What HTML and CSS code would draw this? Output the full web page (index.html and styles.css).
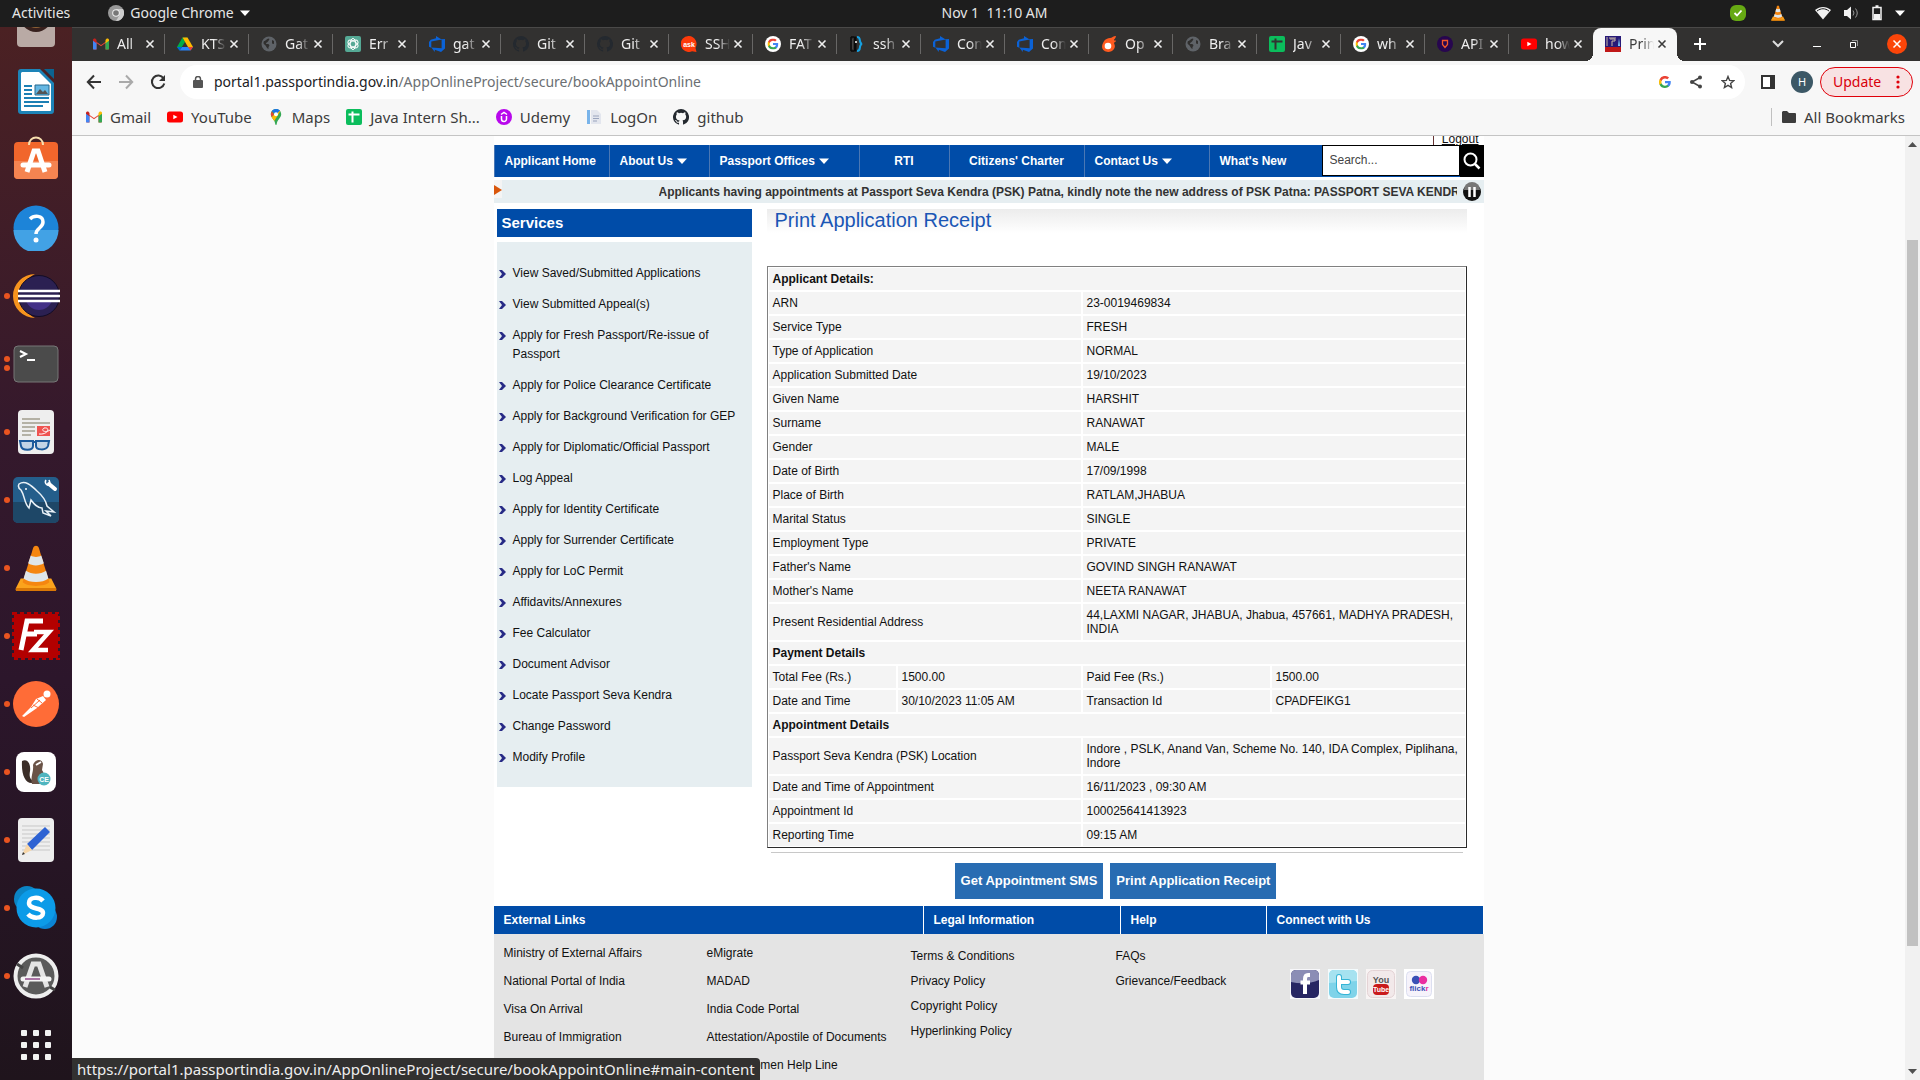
FILE: index.html
```html
<!DOCTYPE html>
<html lang="en">
<head>
<meta charset="utf-8">
<title>Print Application Receipt</title>
<link rel="stylesheet" href="styles.css">
</head>
<body>
<svg class="sprite" aria-hidden="true">
  <symbol id="i-gmail" viewBox="0 0 16 16"><path d="M0 3.500v9c0 .600.400 1 1 1h2.500V7L8 10.300 12.500 7v6.500H15c.600 0 1-.400 1-1v-9L8 9z" fill="#ea4335"/><path d="M0 4v8.500c0 .600.400 1 1 1h2.500V6.500z" fill="#4285f4"/><path d="M16 4v8.500c0 .600-.400 1-1 1h-2.500V6.500z" fill="#34a853"/><path d="M12.500 4v3.200L16 4.700V4c0-1.500-1.700-2-2.500-1.200z" fill="#fbbc04"/><path d="M0 4v.800l3.500 2.500V4l-1-1.200C1.700 2 0 2.500 0 4z" fill="#c5221f"/></symbol>
  <symbol id="i-drive" viewBox="0 0 16 16"><path d="M5.500 1.500h5L8 6z" fill="#188038"/><path d="M5.500 1.500 0 11l2.500 3.500L8 6z" fill="#00ac47"/><path d="M10.500 1.500 16 11h-5L5.500 1.500z" fill="#ffba00"/><path d="M5 11h11l-2.500 3.500h-11z" fill="#2684fc"/><path d="M0 11h5l-2.500 3.500z" fill="#0066da"/><path d="M11 11h5l-2.500 3.500z" fill="#ea4335"/></symbol>
  <symbol id="i-globe" viewBox="0 0 16 16"><circle cx="8" cy="8" r="7.500" fill="#5f6368"/><path d="M3 5c2 0 2-2 5-2.500 1 1-.500 2-1 3s-2 1-2 2 2 0 3 1 0 2-.500 2.500V13c-2-.500-2-3-3.500-4S2 7 3 5zM11 4l2 1v3l-2-.500z" fill="#302f2e"/></symbol>
  <symbol id="i-gpt" viewBox="0 0 16 16"><rect width="16" height="16" rx="2" fill="#55a995"/><g fill="none" stroke="#fff"><ellipse cx="8" cy="8" rx="2.800" ry="5.500"/><ellipse cx="8" cy="8" rx="2.800" ry="5.500" transform="rotate(60 8 8)"/><ellipse cx="8" cy="8" rx="2.800" ry="5.500" transform="rotate(120 8 8)"/></g></symbol>
  <symbol id="i-azure" viewBox="0 0 16 16"><path d="M16 3v9.600L12 16l-6.200-2.300V16L2.300 11.400l10.300.800V3.300zM12.700 3.400 7 0v2.200L1.700 3.800 0 5.900v4.800l2.300 1V5.600z" fill="#0b62d6"/></symbol>
  <symbol id="i-github" viewBox="0 0 16 16"><path fill="currentColor" d="M8 0a8 8 0 0 0-2.530 15.590c.400.070.550-.170.550-.380v-1.490c-2.010.370-2.530-.490-2.690-.940-.090-.230-.480-.940-.820-1.130-.280-.150-.680-.520-.010-.530.630-.010 1.080.580 1.230.820.720 1.210 1.870.870 2.330.660.070-.520.280-.870.510-1.070-1.780-.200-3.640-.890-3.640-3.950 0-.870.310-1.590.820-2.150-.080-.200-.360-1.020.080-2.120 0 0 .670-.210 2.200.820a7.600 7.600 0 0 1 4 0c1.530-1.040 2.200-.820 2.200-.820.440 1.100.160 1.920.080 2.120.510.560.820 1.270.820 2.150 0 3.070-1.870 3.750-3.650 3.950.290.250.540.730.540 1.480v2.200c0 .210.150.460.550.380A8 8 0 0 0 8 0z"/></symbol>
  <symbol id="i-ask" viewBox="0 0 16 16"><path d="M8 0a8 8 0 1 0 3 15.300l4.500.700-1-4A8 8 0 0 0 8 0z" fill="#fc3a0a"/><text x="8" y="10.500" font-size="7" font-weight="700" text-anchor="middle" fill="#fff" font-family="Liberation Sans, sans-serif">ask</text></symbol>
  <symbol id="i-g" viewBox="0 0 16 16"><path fill="#4285f4" d="M15.700 8.200c0-.600 0-1-.100-1.500H8v2.900h4.300c-.200 1-.800 1.900-1.600 2.500v2h2.600c1.500-1.400 2.400-3.400 2.400-5.900z"/><path fill="#34a853" d="M8 16c2.200 0 4-.700 5.300-1.900l-2.600-2c-.700.500-1.600.800-2.700.800-2.100 0-3.900-1.400-4.500-3.300H.800v2.100A8 8 0 0 0 8 16z"/><path fill="#fbbc05" d="M3.500 9.600a4.800 4.800 0 0 1 0-3.100V4.400H.800a8 8 0 0 0 0 7.200z"/><path fill="#ea4335" d="M8 3.200c1.200 0 2.300.400 3.100 1.200l2.300-2.300A8 8 0 0 0 .800 4.400l2.700 2.100C4.100 4.600 5.900 3.200 8 3.200z"/></symbol>
  <symbol id="i-gdisc" viewBox="0 0 16 16"><circle cx="8" cy="8" r="8" fill="#fff"/><use href="#i-g" x="2.500" y="2.500" width="11" height="11"/></symbol>
  <symbol id="i-brace" viewBox="0 0 16 16"><path d="M5 1H2v14h3M2 1h5v14H2z" fill="#0b0b0b" stroke="#0b0b0b"/><path d="M3.500 3v10" stroke="#444"/><path d="M8 1c5 0 1 6 5 7-4 1 0 7-5 7" fill="none" stroke="#16a0e0" stroke-width="2"/><circle cx="7" cy="6" r="1" fill="#fff"/></symbol>
  <symbol id="i-flame" viewBox="0 0 16 16"><path d="M15 0c-3 0-4 2-6 2S4 3 2.500 6 0 12 3 14.500s8 1.500 10-1.500 0-5 0-6 2-1 2-2-2 0-2-1 2-2 2-4z" fill="#ff5a1f"/><circle cx="7" cy="10" r="3.300" fill="#fff"/></symbol>
  <symbol id="i-sheet" viewBox="0 0 16 16"><rect width="16" height="16" rx="2" fill="#0bbd5c"/><path d="M2.500 5.500h11M6.500 2.500v11" stroke="#fff" stroke-width="2"/></symbol>
  <symbol id="i-sheet-dark" viewBox="0 0 16 16"><rect width="16" height="16" rx="2" fill="#0bbd5c"/><path d="M2.500 5.500h11M6.500 2.500v11" stroke="#323130" stroke-width="2"/></symbol>
  <symbol id="i-api" viewBox="0 0 16 16"><circle cx="8" cy="8" r="8" fill="#27064f"/><path d="M5.500 4.500h5v4L8 11.500 5.500 8.500z" fill="none" stroke="#f2572b" stroke-width="1.300"/></symbol>
  <symbol id="i-yt" viewBox="0 0 16 16"><rect y="2.500" width="16" height="11" rx="2.500" fill="#f00"/><path d="M6.300 5.700v4.600L10.500 8z" fill="#fff"/></symbol>
  <symbol id="i-seva" viewBox="0 0 16 16"><path d="M0 0h16v16H0z" fill="#271a78"/><path d="M0 11h16v5H0z" fill="#c01818"/><path d="M2 1v9M5 3h5v2H7v5M4 2h7" stroke="#c9b7a4" fill="none"/><path d="m14 2-1 8h2z" fill="#7fd0ff"/></symbol>
  <symbol id="i-map" viewBox="0 0 16 16"><path d="M8 0C5 0 2.800 2.400 2.800 5.200 2.800 9 7 10.500 7.300 15.300c.1.900 1.300.9 1.400 0C9 10.500 13.200 9 13.200 5.200 13.200 2.400 11 0 8 0z" fill="#34a853"/><path d="M3.600 8.300 9.700 1 12.300 2.300 6.300 12z" fill="#fbbc04"/><path d="M3.800 2.200 8 5.500l4-4A5.200 5.200 0 0 0 8 0C6.300 0 4.800.9 3.800 2.200z" fill="#1a73e8"/><path d="M3.800 2.200A5.500 5.500 0 0 0 3.600 8L6 5.500z" fill="#ea4335"/><circle cx="8" cy="5.200" r="2" fill="#fff"/></symbol>
  <symbol id="i-udemy" viewBox="0 0 16 16"><circle cx="8" cy="8" r="8" fill="#b808ec"/><path d="M5.500 7v3a2.500 2.500 0 0 0 5 0V7M5 5.500l3-2 3 2" fill="none" stroke="#fff" stroke-width="1.500"/></symbol>
  <symbol id="i-doc" viewBox="0 0 16 16"><path d="M1 1h3v14H1z" fill="#79b4ea"/><path d="M5 1h6l4 4v10H5z" fill="#e3e6ee"/><path d="M7 7h6M7 9.500h6M7 12h4" stroke="#9aa4bd"/></symbol>
  <symbol id="i-x" viewBox="0 0 16 16"><path d="m4.500 4.500 7 7m0-7-7 7" stroke="currentColor" stroke-width="1.600" fill="none"/></symbol>
  <symbol id="i-cone" viewBox="0 0 44 48"><path d="M6 35h32l5 10c1 2 0 3-2 3H3c-2 0-3-1-2-3z" fill="#fba31c"/><path d="M1 45h42v3H1z" fill="#d97706"/><path d="M19 3c1-3 5-3 6 0l11 36c-5 5-23 5-28 0z" fill="#f58610"/><path d="m16.500 11-2.700 8c4 3 12 3 16.400 0l-2.700-8c-3 2-8 2-11 0zM11.500 27 9 35c6 5 20 5 26 0l-2.500-8c-6 4-15 4-21 0z" fill="#dfe6ea"/></symbol>
  <symbol id="i-down" viewBox="0 0 10 6"><path d="M0 .5h10L5 6z" fill="#fff"/></symbol>
  <symbol id="i-arrow" viewBox="0 0 7 8"><path d="M0 0h3l4 4-4 4H0l3-4z" fill="#272a86"/></symbol>
</svg>

<header class="topbar">
  <div class="topbar-left">
    <button class="plain">Activities</button>
    <button class="plain app-menu">
      <svg width="16" height="16" viewBox="0 0 16 16"><circle cx="8" cy="8" r="8" fill="#999"/><path d="M8 4h7a8 8 0 0 1-7 12l3.500-6z" fill="#ccc"/><circle cx="8" cy="8" r="3.800" fill="#eee"/><circle cx="8" cy="8" r="2.800" fill="#777"/></svg>
      Google Chrome
      <svg width="10" height="6"><use href="#i-down"/></svg>
    </button>
  </div>
  <time class="clock">Nov 1&nbsp; 11:10 AM</time>
  <div class="tray">
    <svg width="16" height="16" viewBox="0 0 16 16"><rect width="16" height="16" rx="6" fill="#66a913"/><path d="m4.500 8 2.500 2.500 4.500-5" fill="none" stroke="#fff" stroke-width="1.800"/></svg>
    <svg class="tray-cone" width="14" height="16"><use href="#i-cone"/></svg>
    <svg width="16" height="14" viewBox="0 0 16 14"><path d="M0 4c5-4 11-4 16 0l-8 9.500z" fill="#f2f2f2"/><path d="M2 5c4-3 8-3 12 0" fill="none" stroke="#1d1d1d"/></svg>
    <svg width="15" height="14" viewBox="0 0 15 14"><path d="M0 4h3l4-3.500v13L3 10H0z" fill="#f2f2f2"/><path d="M9 4.500q2 2.500 0 5M11.500 2.500q3.500 4.500 0 9" fill="none" stroke="#999"/></svg>
    <svg width="10" height="16" viewBox="0 0 10 16"><path d="M1 2.500h8v12H1zM3.500 1h3" fill="none" stroke="#f2f2f2" stroke-width="1.500"/><path d="M2 9h6v5H2z" fill="#f2f2f2"/></svg>
    <svg width="10" height="6"><use href="#i-down"/></svg>
  </div>
</header>

<div class="desktop">
<nav class="dock" aria-label="Dock">
  <div class="dock-item"><svg width="38" height="46" viewBox="0 0 38 46"><rect width="38" height="46" rx="4" fill="#b9aaa5"/><circle cx="19" cy="15" r="16" fill="#37201d"/><circle cx="19" cy="15" r="12" fill="#8f6437"/></svg></div>
  <div class="dock-item"><svg width="38" height="46" viewBox="0 0 38 46"><path d="M4 0h19l14 14v28a3 3 0 0 1-3 3H4a3 3 0 0 1-3-3V3a3 3 0 0 1 3-3z" fill="#1d84b8"/><path d="M5 3h17l12 12v26a1 1 0 0 1-1 1H5a1 1 0 0 1-1-1V4z" fill="#fff"/><path d="M27 0h10v10z" fill="#0c6390"/><path d="M7 17h8M7 21h8M7 25h8M7 29h25M7 33h25M7 37h19" stroke="#1c7fb4" stroke-width="2"/><path d="M18 16h14v10H18z" fill="#65b7e3" stroke="#27688e"/><path d="m19 25 4-5 3 3 2-2 3 4z" fill="#555"/></svg></div>
  <div class="dock-item"><svg width="46" height="48" viewBox="0 0 46 48"><rect x="1" y="6" width="44" height="37" rx="4" fill="#f1662c"/><path d="M1 25h44v14a4 4 0 0 1-4 4H5a4 4 0 0 1-4-4z" fill="#f58451"/><path d="M16 9c0-10 14-10 14 0" fill="none" stroke="#f7dfae" stroke-width="2"/><path d="m14 36 7-21h4l7 21" fill="none" stroke="#fff" stroke-width="5"/><path d="M10 29h26" stroke="#fff" stroke-width="5" stroke-linecap="round"/></svg></div>
  <div class="dock-item"><svg width="46" height="46" viewBox="0 0 46 46"><circle cx="23" cy="23" r="22.500" fill="#1d84d8"/><path d="M.5 25a22.500 22.500 0 0 0 45 0z" fill="#42a2e5"/><path d="M17 14c4-4 13-4 13 3 0 6-7 6-7 12" fill="none" stroke="#fff" stroke-width="3.500"/><circle cx="23" cy="35" r="2.500" fill="#fff"/></svg></div>
  <div class="dock-item on"><svg width="48" height="44" viewBox="0 0 48 44"><path d="M23 0a22 22 0 0 0 0 44C8 38 8 6 23 0z" fill="#f7941e"/><circle cx="27" cy="22" r="20.500" fill="#2b2052" stroke="#120c26"/><path d="M14 27h26c-5 12-21 12-26 0z" fill="#433087"/><path d="M6 17h42M6 22h42M6 27h42" stroke="#fff" stroke-width="2.500"/></svg></div>
  <div class="dock-item on two"><svg width="46" height="38" viewBox="0 0 46 38"><rect x="1" y="1" width="44" height="36" rx="4" fill="#4b4b4b" stroke="#777"/><path d="m7 6 6 3-6 3M14 15h8" fill="none" stroke="#fff" stroke-width="2"/></svg></div>
  <div class="dock-item on"><svg width="38" height="46" viewBox="0 0 38 46"><rect x="1" y="1" width="36" height="44" rx="4" fill="#eee"/><path d="M5 10h18M5 14h28M5 18h13M5 22h13M5 26h9" stroke="#b4b1a5" stroke-width="2"/><path d="M20 17h13v10H20z" fill="#ef5350"/><path d="M22 25c9 1 12-7 5-6-4 3 2 5 6 2" stroke="#fff" fill="none"/><path d="M3 32h13v5c0 5-11 5-12 0zM19 32h13l-1 5c-2 5-12 4-12 0zM16 33h3" fill="#c2d4e5" stroke="#1b5a9b" stroke-width="2"/></svg></div>
  <div class="dock-item on"><svg width="46" height="46" viewBox="0 0 46 46"><rect width="46" height="46" rx="5" fill="#245e8b"/><path d="M0 25h46v16a5 5 0 0 1-5 5H5a5 5 0 0 1-5-5z" fill="#1e4767"/><path d="M6 7c6-4 12 1 18 7 7 6 9 10 10 15l7 6-8-1 5 5-8-3-1-5c-5 0-8-4-11-8l-2 8c-5-5-4-12-8-18-3-2-3-4-2-6z" fill="none" stroke="#e9f1f7" stroke-width="1.500"/><circle cx="13" cy="12" r="1" fill="#fff"/><path d="m36 7 6 5" stroke="#fff" stroke-width="4" stroke-linecap="round"/><path d="M33 3c-2 3 1 6 4 5M36 3l1 3" stroke="#fff" stroke-width="1.500" fill="none"/></svg></div>
  <div class="dock-item on"><svg width="42" height="46"><use href="#i-cone"/></svg></div>
  <div class="dock-item on"><svg width="48" height="48" viewBox="0 0 48 48"><rect x="2" y="2" width="44" height="44" fill="#b30000"/><rect x="1" y="1" width="46" height="46" fill="none" stroke="#b30000" stroke-width="2" stroke-dasharray="4 3"/><path d="m9 38 6-29h16M12 22h13" fill="none" stroke="#fff" stroke-width="5"/><path d="M22 20h15L21 38h15" fill="none" stroke="#fff" stroke-width="4.500"/></svg></div>
  <div class="dock-item on"><svg width="46" height="46" viewBox="0 0 46 46"><circle cx="23" cy="23" r="23" fill="#ff6c37"/><circle cx="34" cy="13" r="3.500" fill="#fff"/><path d="m30 15 3 4-9 8-13 9-2-1 9-9 5-8z" fill="#fff"/><path d="m18 27 9-8M20 24l6 3M24 18l5 4" stroke="#ff6c37"/></svg></div>
  <div class="dock-item on"><svg width="40" height="40" viewBox="0 0 40 40"><rect width="40" height="40" rx="8" fill="#fff"/><path d="M6 9c6-3 9 4 8 10s0 9 5 11c-8 4-14-5-13-21z" fill="#3b2e28"/><path d="M17 13c2-6 9-7 10-1l-1 6c4 6 2 12-1 14h-9c-2-7 2-12 1-19z" fill="#6a5347"/><path d="m20 13 5-3" stroke="#fff" stroke-width="2"/><circle cx="28" cy="27" r="6.500" fill="#4fb5bf"/><text x="28" y="30" text-anchor="middle" font-size="7" font-weight="700" fill="#fff" font-family="Liberation Sans, sans-serif">CE</text></svg></div>
  <div class="dock-item on"><svg width="38" height="46" viewBox="0 0 38 46"><rect x="1" y="1" width="36" height="44" rx="4" fill="#eee"/><path d="M5 9h28M5 13h28M5 17h28M5 21h28M5 25h28M5 29h28M5 33h28" stroke="#c7c7c7"/><path d="m28 10 5 5-18 18-5-6z" fill="#2d62d3"/><path d="m10 27 5 6-10 5z" fill="#f6d6a9"/><path d="m6 35 2 2-3 1z" fill="#333"/></svg></div>
  <div class="dock-item on"><svg width="44" height="44" viewBox="0 0 44 44"><circle cx="13" cy="13" r="13" fill="#0b84c4"/><circle cx="31" cy="31" r="12" fill="#0b84d4"/><circle cx="22" cy="22" r="19.500" fill="#0c9be8"/><path d="M29 15c-4-5-14-4-14 2 0 7 14 4 14 10 0 6-11 6-15 1" fill="none" stroke="#fff" stroke-width="4.500"/></svg></div>
  <div class="dock-item on"><svg width="46" height="46" viewBox="0 0 46 46"><circle cx="23" cy="23" r="20.500" fill="#5b5b5b" stroke="#eee" stroke-width="4"/><path d="m12 34 8-23h6l8 23" fill="none" stroke="#e5e5e5" stroke-width="5"/><path d="M10 26h26" stroke="#f5f5f5" stroke-width="5" stroke-linecap="round"/><path d="M12 26h15" stroke="#924a8b" stroke-width="1.500"/><path d="m4 11 6 4M37 34l5 3" stroke="#444" stroke-width="3"/></svg></div>
  <div class="dock-item apps"><svg width="30" height="30" viewBox="0 0 30 30" fill="#f2f2f2"><rect width="6" height="6" rx="1"/><rect x="12" width="6" height="6" rx="1"/><rect x="24" width="6" height="6" rx="1"/><rect y="12" width="6" height="6" rx="1"/><rect x="12" y="12" width="6" height="6" rx="1"/><rect x="24" y="12" width="6" height="6" rx="1"/><rect y="24" width="6" height="6" rx="1"/><rect x="12" y="24" width="6" height="6" rx="1"/><rect x="24" y="24" width="6" height="6" rx="1"/></svg></div>
</nav>

<div class="browser">
  <div class="tabstrip">
    <div class="tab"><svg class="ico"><use href="#i-gmail"/></svg><span class="tab-title">All</span><svg class="ico"><use href="#i-x"/></svg></div>
    <div class="tab"><svg class="ico"><use href="#i-drive"/></svg><span class="tab-title">KTS</span><svg class="ico"><use href="#i-x"/></svg></div>
    <div class="tab"><svg class="ico"><use href="#i-globe"/></svg><span class="tab-title">Gat</span><svg class="ico"><use href="#i-x"/></svg></div>
    <div class="tab"><svg class="ico"><use href="#i-gpt"/></svg><span class="tab-title">Err</span><svg class="ico"><use href="#i-x"/></svg></div>
    <div class="tab"><svg class="ico"><use href="#i-azure"/></svg><span class="tab-title">gat</span><svg class="ico"><use href="#i-x"/></svg></div>
    <div class="tab"><svg class="ico dim"><use href="#i-github"/></svg><span class="tab-title">Git</span><svg class="ico"><use href="#i-x"/></svg></div>
    <div class="tab"><svg class="ico dim"><use href="#i-github"/></svg><span class="tab-title">Git</span><svg class="ico"><use href="#i-x"/></svg></div>
    <div class="tab"><svg class="ico"><use href="#i-ask"/></svg><span class="tab-title">SSH</span><svg class="ico"><use href="#i-x"/></svg></div>
    <div class="tab"><svg class="ico"><use href="#i-gdisc"/></svg><span class="tab-title">FAT</span><svg class="ico"><use href="#i-x"/></svg></div>
    <div class="tab"><svg class="ico"><use href="#i-brace"/></svg><span class="tab-title">ssh</span><svg class="ico"><use href="#i-x"/></svg></div>
    <div class="tab"><svg class="ico"><use href="#i-azure"/></svg><span class="tab-title">Con</span><svg class="ico"><use href="#i-x"/></svg></div>
    <div class="tab"><svg class="ico"><use href="#i-azure"/></svg><span class="tab-title">Con</span><svg class="ico"><use href="#i-x"/></svg></div>
    <div class="tab"><svg class="ico"><use href="#i-flame"/></svg><span class="tab-title">Op</span><svg class="ico"><use href="#i-x"/></svg></div>
    <div class="tab"><svg class="ico"><use href="#i-globe"/></svg><span class="tab-title">Bra</span><svg class="ico"><use href="#i-x"/></svg></div>
    <div class="tab"><svg class="ico"><use href="#i-sheet-dark"/></svg><span class="tab-title">Jav</span><svg class="ico"><use href="#i-x"/></svg></div>
    <div class="tab"><svg class="ico"><use href="#i-gdisc"/></svg><span class="tab-title">wh</span><svg class="ico"><use href="#i-x"/></svg></div>
    <div class="tab"><svg class="ico"><use href="#i-api"/></svg><span class="tab-title">API</span><svg class="ico"><use href="#i-x"/></svg></div>
    <div class="tab last"><svg class="ico"><use href="#i-yt"/></svg><span class="tab-title">how</span><svg class="ico"><use href="#i-x"/></svg></div>
    <div class="tab active"><svg class="ico"><use href="#i-seva"/></svg><span class="tab-title">Prin</span><svg class="ico"><use href="#i-x"/></svg></div>
    <button class="plain new-tab" aria-label="New tab"><svg width="14" height="14" viewBox="0 0 14 14"><path d="M7 1v12M1 7h12" stroke="#fff" stroke-width="2"/></svg></button>
    <div class="win">
      <svg width="12" height="8" viewBox="0 0 12 8"><path d="m1 1 5 5 5-5" fill="none" stroke="#ddd" stroke-width="2"/></svg>
      <svg width="8" height="8" viewBox="0 0 8 8"><path d="M0 6.500h8" stroke="#fff"/></svg>
      <svg width="8" height="8" viewBox="0 0 8 8"><path d="M.5 2.500h5v5h-5z" fill="none" stroke="#fff"/><path d="M2 .5h5.500V6" fill="none" stroke="#999"/></svg>
      <svg width="20" height="20" viewBox="0 0 20 20"><circle cx="10" cy="10" r="10" fill="#fb4509"/><path d="m6.500 6.500 7 7m0-7-7 7" stroke="#fff" stroke-width="1.500"/></svg>
    </div>
  </div>

  <div class="toolbar">
    <button class="plain" aria-label="Back"><svg width="16" height="16" viewBox="0 0 16 16"><path d="M15 8H2m6-6.500L1.800 8 8 14.500" fill="none" stroke="#333" stroke-width="2"/></svg></button>
    <button class="plain" aria-label="Forward"><svg width="16" height="16" viewBox="0 0 16 16"><path d="M1 8h13M8 1.500 14.200 8 8 14.500" fill="none" stroke="#aaa" stroke-width="2"/></svg></button>
    <button class="plain" aria-label="Reload"><svg width="16" height="16" viewBox="0 0 16 16"><path d="M13.500 4.300A6.300 6.300 0 1 0 14.300 9.500" fill="none" stroke="#333" stroke-width="2"/><path d="M15 1v6H9z" fill="#333"/></svg></button>
    <div class="omnibox">
      <svg width="10" height="12" viewBox="0 0 10 12"><rect y="4" width="10" height="8" rx="1" fill="#555"/><path d="M2.500 5V3a2.500 2.500 0 0 1 5 0v2" fill="none" stroke="#555" stroke-width="1.500"/></svg>
      <span class="url">portal1.passportindia.gov.in<span>/AppOnlineProject/secure/bookAppointOnline</span></span>
      <svg width="12" height="12"><use href="#i-g"/></svg>
      <svg width="14" height="14" viewBox="0 0 14 14"><path d="M11 2.500 3 7l8 4.500" fill="none" stroke="#444" stroke-width="1.500"/><g fill="#444"><circle cx="11" cy="2.500" r="2"/><circle cx="3" cy="7" r="2"/><circle cx="11" cy="11.500" r="2"/></g></svg>
      <svg width="14" height="14" viewBox="0 0 14 14"><path d="m7 1.500 1.600 3.900 4.200.300-3.200 2.700 1 4.100L7 10.300l-3.600 2.200 1-4.100-3.200-2.700 4.200-.300z" fill="none" stroke="#444" stroke-width="1.400"/></svg>
    </div>
    <svg width="14" height="14" viewBox="0 0 14 14"><path d="M1 1h12v12H1z" fill="#fff" stroke="#333" stroke-width="2"/><path d="M9 1h4v12H9z" fill="#333"/></svg>
    <span class="avatar">H</span>
    <button class="update">Update <svg width="4" height="14" viewBox="0 0 4 14" fill="#e0000a"><circle cx="2" cy="2" r="1.600"/><circle cx="2" cy="7" r="1.600"/><circle cx="2" cy="12" r="1.600"/></svg></button>
  </div>

  <div class="bookmarks">
    <a href="#"><svg class="ico"><use href="#i-gmail"/></svg>Gmail</a>
    <a href="#"><svg class="ico"><use href="#i-yt"/></svg>YouTube</a>
    <a href="#"><svg class="ico"><use href="#i-map"/></svg>Maps</a>
    <a href="#"><svg class="ico"><use href="#i-sheet"/></svg>Java Intern Sh...</a>
    <a href="#"><svg class="ico"><use href="#i-udemy"/></svg>Udemy</a>
    <a href="#"><svg class="ico"><use href="#i-doc"/></svg>LogOn</a>
    <a href="#"><svg class="ico dim"><use href="#i-github"/></svg>github</a>
    <a href="#" class="all"><svg width="14" height="12" viewBox="0 0 14 12"><path d="M1 0h4l2 2h6a1 1 0 0 1 1 1v8a1 1 0 0 1-1 1H1a1 1 0 0 1-1-1V1z" fill="#3c3c3c"/></svg>All Bookmarks</a>
  </div>

  <div class="viewport">
    <div class="page">
      <div class="site">
        <div class="account"><a href="#">Logout</a></div>
        <nav class="menu">
          <a href="#">Applicant Home</a>
          <a href="#">About Us <svg width="10" height="6"><use href="#i-down"/></svg></a>
          <a href="#">Passport Offices <svg width="10" height="6"><use href="#i-down"/></svg></a>
          <a href="#" class="mid">RTI</a>
          <a href="#" class="mid">Citizens' Charter</a>
          <a href="#">Contact Us <svg width="10" height="6"><use href="#i-down"/></svg></a>
          <a href="#">What's New</a>
          <form class="search">
            <input type="text" placeholder="Search..." aria-label="Search">
            <button type="button" aria-label="Search"><svg width="18" height="18" viewBox="0 0 18 18"><circle cx="7.500" cy="7.500" r="6" fill="none" stroke="#fff" stroke-width="2"/><path d="m12 12 4.500 4.500" stroke="#fff" stroke-width="2.500"/></svg></button>
          </form>
        </nav>
        <div class="ticker">
          <svg width="8" height="18" viewBox="0 0 8 18"><path d="M0 0h8v18H0z" fill="#f4f4f4"/><path d="m0 5 8 5-8 5z" fill="#d9560b"/></svg>
          <p>Applicants having appointments at Passport Seva Kendra (PSK) Patna, kindly note the new address of PSK Patna: PASSPORT SEVA KENDRA</p>
          <button class="plain" aria-label="Pause"><svg width="20" height="20" viewBox="0 0 20 20"><circle cx="10" cy="10" r="9" fill="#111"/><path d="M2 8a8 8 0 0 1 16 0z" fill="#777"/><path d="M7.500 5v10M12.500 5v10" stroke="#fff" stroke-width="2.500"/></svg></button>
        </div>

        <div class="columns">
          <aside class="services">
            <h2>Services</h2>
            <ul>
              <li><svg width="7" height="8"><use href="#i-arrow"/></svg><a href="#">View Saved/Submitted Applications</a></li>
              <li><svg width="7" height="8"><use href="#i-arrow"/></svg><a href="#">View Submitted Appeal(s)</a></li>
              <li><svg width="7" height="8"><use href="#i-arrow"/></svg><a href="#">Apply for Fresh Passport/Re-issue of Passport</a></li>
              <li><svg width="7" height="8"><use href="#i-arrow"/></svg><a href="#">Apply for Police Clearance Certificate</a></li>
              <li><svg width="7" height="8"><use href="#i-arrow"/></svg><a href="#">Apply for Background Verification for GEP</a></li>
              <li><svg width="7" height="8"><use href="#i-arrow"/></svg><a href="#">Apply for Diplomatic/Official Passport</a></li>
              <li><svg width="7" height="8"><use href="#i-arrow"/></svg><a href="#">Log Appeal</a></li>
              <li><svg width="7" height="8"><use href="#i-arrow"/></svg><a href="#">Apply for Identity Certificate</a></li>
              <li><svg width="7" height="8"><use href="#i-arrow"/></svg><a href="#">Apply for Surrender Certificate</a></li>
              <li><svg width="7" height="8"><use href="#i-arrow"/></svg><a href="#">Apply for LoC Permit</a></li>
              <li><svg width="7" height="8"><use href="#i-arrow"/></svg><a href="#">Affidavits/Annexures</a></li>
              <li><svg width="7" height="8"><use href="#i-arrow"/></svg><a href="#">Fee Calculator</a></li>
              <li><svg width="7" height="8"><use href="#i-arrow"/></svg><a href="#">Document Advisor</a></li>
              <li><svg width="7" height="8"><use href="#i-arrow"/></svg><a href="#">Locate Passport Seva Kendra</a></li>
              <li><svg width="7" height="8"><use href="#i-arrow"/></svg><a href="#">Change Password</a></li>
              <li><svg width="7" height="8"><use href="#i-arrow"/></svg><a href="#">Modify Profile</a></li>
            </ul>
          </aside>

          <main class="receipt">
            <h1>Print Application Receipt</h1>
            <table>
              <colgroup><col class="c1"><col class="c2"><col class="c3"><col class="c4"></colgroup>
              <tr><th colspan="4">Applicant Details:</th></tr>
              <tr><td colspan="2">ARN</td><td colspan="2">23-0019469834</td></tr>
              <tr><td colspan="2">Service Type</td><td colspan="2">FRESH</td></tr>
              <tr><td colspan="2">Type of Application</td><td colspan="2">NORMAL</td></tr>
              <tr><td colspan="2">Application Submitted Date</td><td colspan="2">19/10/2023</td></tr>
              <tr><td colspan="2">Given Name</td><td colspan="2">HARSHIT</td></tr>
              <tr><td colspan="2">Surname</td><td colspan="2">RANAWAT</td></tr>
              <tr><td colspan="2">Gender</td><td colspan="2">MALE</td></tr>
              <tr><td colspan="2">Date of Birth</td><td colspan="2">17/09/1998</td></tr>
              <tr><td colspan="2">Place of Birth</td><td colspan="2">RATLAM,JHABUA</td></tr>
              <tr><td colspan="2">Marital Status</td><td colspan="2">SINGLE</td></tr>
              <tr><td colspan="2">Employment Type</td><td colspan="2">PRIVATE</td></tr>
              <tr><td colspan="2">Father's Name</td><td colspan="2">GOVIND SINGH RANAWAT</td></tr>
              <tr><td colspan="2">Mother's Name</td><td colspan="2">NEETA RANAWAT</td></tr>
              <tr><td colspan="2">Present Residential Address</td><td colspan="2">44,LAXMI NAGAR, JHABUA, Jhabua, 457661, MADHYA PRADESH, INDIA</td></tr>
              <tr><th colspan="4">Payment Details</th></tr>
              <tr><td>Total Fee (Rs.)</td><td>1500.00</td><td>Paid Fee (Rs.)</td><td>1500.00</td></tr>
              <tr><td>Date and Time</td><td>30/10/2023 11:05 AM</td><td>Transaction Id</td><td>CPADFEIKG1</td></tr>
              <tr><th colspan="4">Appointment Details</th></tr>
              <tr><td colspan="2">Passport Seva Kendra (PSK) Location</td><td colspan="2">Indore , PSLK, Anand Van, Scheme No. 140, IDA Complex, Piplihana, Indore</td></tr>
              <tr><td colspan="2">Date and Time of Appointment</td><td colspan="2">16/11/2023 , 09:30 AM</td></tr>
              <tr><td colspan="2">Appointment Id</td><td colspan="2">100025641413923</td></tr>
              <tr><td colspan="2">Reporting Time</td><td colspan="2">09:15 AM</td></tr>
            </table>
            <hr>
            <div class="actions">
              <button>Get Appointment SMS</button>
              <button>Print Application Receipt</button>
            </div>
          </main>
        </div>

        <footer>
          <div class="foot-head"><h3>External Links</h3><h3>Legal Information</h3><h3>Help</h3><h3>Connect with Us</h3></div>
          <div class="foot-body">
            <ul class="wide"><li><a href="#">Ministry of External Affairs</a></li><li><a href="#">National Portal of India</a></li><li><a href="#">Visa On Arrival</a></li><li><a href="#">Bureau of Immigration</a></li></ul>
            <ul class="wide"><li><a href="#">eMigrate</a></li><li><a href="#">MADAD</a></li><li><a href="#">India Code Portal</a></li><li><a href="#">Attestation/Apostile of Documents</a></li><li><a href="#">Indian Women Help Line</a></li></ul>
            <ul><li><a href="#">Terms &amp; Conditions</a></li><li><a href="#">Privacy Policy</a></li><li><a href="#">Copyright Policy</a></li><li><a href="#">Hyperlinking Policy</a></li></ul>
            <ul><li><a href="#">FAQs</a></li><li><a href="#">Grievance/Feedback</a></li></ul>
            <div class="social">
              <a href="#" aria-label="Facebook"><svg width="30" height="30" viewBox="0 0 30 30"><path d="M0 0h30v30H0z" fill="#f7f7fa"/><rect x="1" y="1" width="28" height="28" rx="5" fill="#272663"/><path d="M1 13V6a5 5 0 0 1 5-5h18a5 5 0 0 1 5 5v5C20 15 10 15 1 13z" fill="#8b8db5"/><path d="M20 6h-2q-3 0-3 4v15M10.500 13.500H20" stroke="#fff" stroke-width="4" fill="none"/></svg></a>
              <a href="#" aria-label="Twitter"><svg width="30" height="30" viewBox="0 0 30 30"><path d="M0 0h30v30H0z" fill="#f3fbfd"/><rect x="1" y="1" width="28" height="28" rx="5" fill="#7fd3e9"/><path d="M1 14V6a5 5 0 0 1 5-5h18a5 5 0 0 1 5 5v6z" fill="#a6e2f0"/><path d="M11 8v10q0 5 5 5h4M11 13h9" stroke="#35b4d6" stroke-width="6" fill="none" stroke-linecap="round"/><path d="M11 8v10q0 5 5 5h4M11 13h9" stroke="#fff" stroke-width="4" fill="none" stroke-linecap="round"/></svg></a>
              <a href="#" aria-label="YouTube"><svg width="30" height="30" viewBox="0 0 30 30" font-family="Liberation Sans Narrow, Liberation Sans, sans-serif" font-weight="700" text-anchor="middle"><path d="M0 0h30v30H0z" fill="#f8f4f4"/><rect x="1.500" y="1.500" width="27" height="27" rx="5" fill="#f2e9ea" stroke="#e4d3d5"/><text x="15" y="14" font-size="9" fill="#555">You</text><rect x="7" y="15" width="16" height="11" rx="4" fill="#c9191b"/><text x="15" y="23" font-size="7" fill="#fff">Tube</text></svg></a>
              <a href="#" aria-label="Flickr"><svg width="30" height="30" viewBox="0 0 30 30"><path d="M0 0h30v30H0z" fill="#fff"/><rect x="2.500" y="2.500" width="25" height="25" rx="4" fill="#f6f3fb" stroke="#dcdff0"/><circle cx="12" cy="11" r="4.200" fill="#3a50b5"/><circle cx="19" cy="11" r="4.200" fill="#ea2fa0"/><text x="15" y="22" font-size="8" font-weight="700" text-anchor="middle" fill="#3a50b5" font-family="Liberation Sans, sans-serif">flick<tspan fill="#ea2fa0">r</tspan></text></svg></a>
            </div>
          </div>
        </footer>
      </div>
    </div>
    <div class="scrollbar">
      <svg width="9" height="5" viewBox="0 0 9 5"><path d="M0 5h9L4.500 0z" fill="#505050"/></svg>
      <div class="track"><div class="thumb"></div></div>
      <svg width="9" height="5" viewBox="0 0 9 5"><path d="M0 0h9L4.500 5z" fill="#505050"/></svg>
    </div>
    <div class="status">https://portal1.passportindia.gov.in/AppOnlineProject/secure/bookAppointOnline#main-content</div>
  </div>
</div>
</div>
</body>
</html>
```
FILE: styles.css
```css
* { box-sizing: border-box; }
html, body { height: 100%; }
body {
  margin: 0;
  display: flex;
  flex-direction: column;
  overflow: hidden;
  background: #1d1d1d;
  font-family: "Noto Sans", "Open Sans", sans-serif;
  font-size: 14px;
  line-height: 18px;
  color: #3c3c3c;
}
ul { list-style: none; margin: 0; padding: 0; }
h1, h2, h3, p { margin: 0; }
a { color: inherit; text-decoration: none; }
svg { flex: none; }
button { font: inherit; cursor: pointer; }
.sprite { position: absolute; width: 0; height: 0; }
.ico { width: 16px; height: 16px; }
.dim { color: #24292f; }
.plain { border: 0; padding: 0; background: none; color: inherit; display: flex; align-items: center; }

/* Desktop panel */
.topbar {
  flex: none;
  height: 27px;
  display: grid;
  grid-template-columns: 1fr auto 1fr;
  align-items: center;
  padding: 0 15px 1px 12px;
  color: #e6e6e6;
}
.topbar-left { display: flex; gap: 38px; }
.app-menu { gap: 6px; }
.clock { padding-left: 72px; }
.tray { display: flex; justify-content: flex-end; align-items: center; gap: 13px; }
.tray-cone { margin: 0 17px 0 12px; }

.desktop { flex: 1; min-height: 0; display: flex; }

/* Dock */
.dock {
  flex: none;
  width: 72px;
  display: flex;
  flex-direction: column;
  justify-content: flex-end;
  overflow: hidden;
  background: linear-gradient(#4b2123, #35192c 38%, #2c162b 62%, #1f141c);
}
.dock-item { flex: none; height: 68px; display: grid; place-items: center; position: relative; }
.dock-item.apps { height: 70px; }
.dock-item.on::before {
  content: "";
  position: absolute;
  left: 4px;
  top: 31px;
  width: 6px;
  height: 6px;
  border-radius: 50%;
  background: #e95420;
}
.dock-item.two::before { top: 26px; box-shadow: 0 9px #e95420; }

/* Browser chrome */
.browser { flex: 1; min-width: 0; display: flex; flex-direction: column; background: #f7f7f7; }
.tabstrip {
  flex: none;
  height: 34px;
  display: flex;
  align-items: stretch;
  padding: 0 13px 0 9px;
  background: #323130;
  border-top: 1px solid #4a4948;
  color: #eee;
}
.tab { flex: 0 1 84px; min-width: 0; display: flex; align-items: center; padding: 0 0 2px 12px; position: relative; }
.tab::after { content: ""; position: absolute; right: 0; top: 6px; height: 20px; width: 1px; background: #686766; }
.tab.last::after { display: none; }
.tab-title {
  width: 25px;
  margin-left: 8px;
  overflow: hidden;
  white-space: nowrap;
  mask-image: linear-gradient(90deg, #000 50%, transparent);
}
.tab.active { background: #f7f7f7; color: #3c3c3c; border-radius: 8px 8px 0 0; }
.tab.active::before, .tab.active::after {
  content: "";
  position: absolute;
  top: auto;
  bottom: 0;
  width: 8px;
  height: 8px;
}
.tab.active::before { left: -8px; background: radial-gradient(circle at 0 0, transparent 8px, #f7f7f7 8px); }
.tab.active::after { right: -8px; background: radial-gradient(circle at 100% 0, transparent 8px, #f7f7f7 8px); }
.new-tab { margin-left: 16px; padding-bottom: 2px; }
.win { margin-left: auto; display: flex; align-items: center; gap: 29px; padding-bottom: 2px; }

.toolbar { flex: none; height: 42px; display: flex; align-items: center; gap: 16px; padding: 0 7px 0 14px; }
.omnibox {
  flex: 1;
  height: 34px;
  display: flex;
  align-items: center;
  gap: 18px;
  padding: 0 10px 0 13px;
  margin-left: -2px;
  border-radius: 17px;
  background: #fff;
}
.url { flex: 1; margin-left: -7px; color: #202124; }
.url span { color: #6b6f73; }
.avatar {
  width: 22px;
  height: 22px;
  margin-right: -9px;
  border-radius: 50%;
  background: #3c5866;
  color: #fff;
  font-size: 11px;
  line-height: 22px;
  text-align: center;
}
.update {
  width: 93px;
  height: 30px;
  display: flex;
  align-items: center;
  justify-content: space-between;
  padding: 0 12px;
  border: 1px solid #e0000a;
  border-radius: 15px;
  background: #f8e2e3;
  color: #d9000a;
}
.bookmarks {
  flex: none;
  height: 33px;
  display: flex;
  align-items: center;
  gap: 16px;
  padding: 0 15px 5px 14px;
  border-bottom: 1px solid #c4c4c4;
  font-size: 15px;
}
.bookmarks a { display: flex; align-items: center; gap: 8px; }
.bookmarks .all { margin-left: auto; padding-left: 10px; border-left: 1px solid #c0c0c0; }

/* Web page */
.viewport { flex: 1; min-height: 0; display: flex; position: relative; background: #fbfbfb; }
.page { flex: 1; overflow: hidden; }
.site {
  max-width: 990px;
  min-height: 100%;
  margin: 0 auto;
  background: #fff;
  font-family: "Liberation Sans", Arial, sans-serif;
  font-size: 12px;
  line-height: 14px;
  color: #111;
}
.account { height: 9px; display: flex; justify-content: flex-end; align-items: flex-end; padding-right: 5px; line-height: 12px; overflow: hidden; }
.account a { padding-left: 8px; border-left: 1px solid #633; text-decoration: underline; }
.menu {
  height: 32px;
  display: grid;
  grid-template-columns: 115px 100px 150px 90px 135px 125px 1fr 162px;
  padding-bottom: 3px;
  background: #004ca8;
  color: #fff;
  font-weight: 700;
}
.menu > a { display: flex; align-items: center; gap: 4px; padding-left: 10px; border-left: 1px solid #4a77b4; }
.menu .mid { justify-content: center; padding-left: 0; }
.search { height: 32px; display: flex; }
.search input {
  flex: 1;
  min-width: 0;
  height: 31px;
  padding: 0 7px 2px;
  border: 1px solid #000;
  font: inherit;
  font-weight: 400;
}
.search input::placeholder { color: #444; opacity: 1; }
.search button { width: 24px; padding: 0; border: 0; background: #000; display: grid; place-items: center; }
.ticker { height: 23px; margin: 3px 0 6px; display: flex; background: #e6eef1; color: #333; font-weight: 700; }
.ticker p { flex: 1; margin-left: 157px; line-height: 24px; overflow: hidden; white-space: nowrap; }
.ticker button { margin: 0 2px 0 5px; }

.columns { display: grid; grid-template-columns: 255px 1fr; gap: 15px; padding: 0 17px 7px 3px; align-items: start; }
.services h2 { height: 28px; padding-left: 5px; background: #004ca8; color: #fff; font-size: 15px; line-height: 28px; }
.services ul { display: grid; gap: 12px; margin-top: 5px; padding: 22px 8px 20px 2px; background: #e6eef1; line-height: 19px; }
.services li { display: flex; gap: 7px; }
.services svg { margin-top: 6px; }
.receipt h1 {
  height: 24px;
  padding-left: 8px;
  margin-bottom: 33px;
  background: linear-gradient(#ececec, #fff);
  color: #1a56b5;
  font-size: 20px;
  font-weight: 400;
  line-height: 22px;
}
.receipt table {
  width: 100%;
  table-layout: fixed;
  border-collapse: separate;
  border-spacing: 0;
  border: 1px solid;
  border-color: #808080 #2b2b2b #2b2b2b #808080;
}
.receipt th, .receipt td {
  padding: 4px;
  border: 1px solid #fff;
  background: #f4f4f4;
  background-clip: padding-box;
  text-align: left;
}
.c1 { width: 129px; }
.c2 { width: 185px; }
.c3 { width: 189px; }
.receipt hr { margin: 4px 4px 10px; border: 0; border-top: 1px solid #c8c8c8; }
.actions { display: flex; justify-content: center; gap: 7px; padding-right: 2px; }
.actions button {
  height: 36px;
  padding: 0 6px;
  border: 0;
  background: #286cb2;
  color: #fff;
  font-size: 13px;
  font-weight: 700;
}
.foot-head { display: grid; grid-template-columns: 429px 196px 145px 1fr; gap: 1px; margin-right: 1px; }
.foot-head h3 { padding-left: 10px; background: #004ca8; color: #fff; font-size: 12px; line-height: 28px; }
.foot-body { display: grid; grid-template-columns: 203px 204px 205px 174px 1fr; padding-left: 10px; min-height: 190px; background: #e4e4e4; }
.foot-body ul { padding-top: 10px; line-height: 25px; }
.foot-body .wide { padding-top: 5px; line-height: 28px; }
.social { display: flex; gap: 8px; padding-top: 35px; }
.social a { display: block; }
.social svg { display: block; }

.scrollbar { flex: none; width: 15px; display: flex; flex-direction: column; align-items: center; gap: 6px; padding: 6px 0; background: #f1f1f1; }
.track { flex: 1; width: 11px; padding: 87px 0 117px; }
.thumb { height: 100%; background: #c1c1c1; }
.status {
  position: absolute;
  left: 0;
  bottom: 0;
  height: 22px;
  padding: 0 5px;
  border-radius: 0 4px 0 0;
  background: #323130;
  color: #eee;
  font-size: 15px;
  line-height: 22px;
}
```
